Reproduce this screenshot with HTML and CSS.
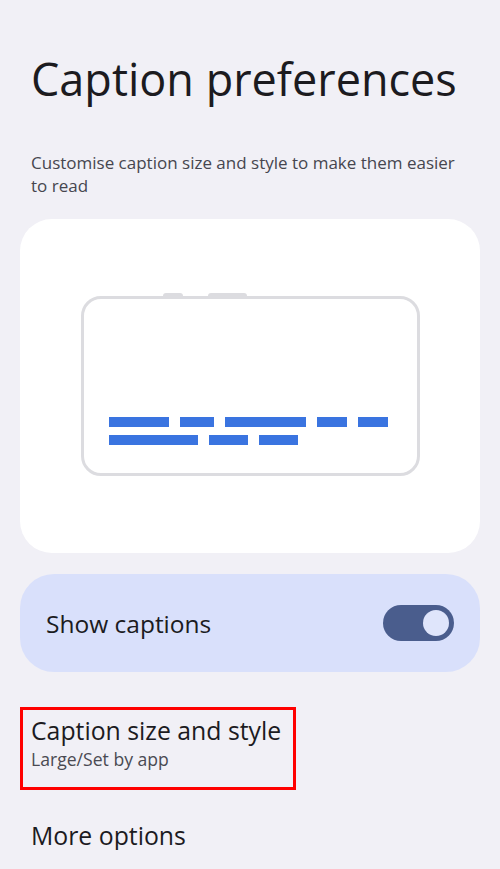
FILE: index.html
```html
<!DOCTYPE html>
<html>
<head>
<meta charset="utf-8">
<link rel="stylesheet" href="styles.css">
</head>
<body>
<div class="page">
  <h1 class="title">Caption preferences</h1>
  <p class="subtitle">Customise caption size and style to make them easier to read</p>
  <div class="preview">
    <div class="phone">
      <div class="notch notch-a"></div>
      <div class="notch notch-b"></div>
      <div class="lines">
        <div class="line">
          <span class="bar" style="width:60px"></span>
          <span class="bar" style="width:34px"></span>
          <span class="bar" style="width:81px"></span>
          <span class="bar" style="width:30px"></span>
          <span class="bar" style="width:30px"></span>
        </div>
        <div class="line">
          <span class="bar" style="width:89px"></span>
          <span class="bar" style="width:39px"></span>
          <span class="bar" style="width:39px"></span>
        </div>
      </div>
    </div>
  </div>
  <div class="toggle-card">
    <span class="toggle-label">Show captions</span>
    <span class="switch"><span class="knob"></span></span>
  </div>
  <div class="item highlighted">
    <div class="item-title">Caption size and style</div>
    <div class="item-sub">Large/Set by app</div>
  </div>
  <div class="item plain">
    <div class="item-title">More options</div>
  </div>
</div>
</body>
</html>
```
FILE: styles.css
```css
html, body {
  margin: 0;
  padding: 0;
  background: #f1f0f6;
}
body {
  font-family: "Open Sans", "Roboto", sans-serif;
  color: #1c1b1f;
}
.page {
  padding: 0 20px;
  display: flex;
  flex-direction: column;
}
.title {
  margin: 51px 0 0 11px;
  font-weight: 400;
  font-size: 45px;
  line-height: 56px;
  letter-spacing: 0;
}
.subtitle {
  margin: 44px 0 0 11px;
  max-width: 442px;
  font-size: 17px;
  line-height: 23px;
  color: #46464f;
}
.preview {
  margin-top: 22px;
  height: 334px;
  background: #ffffff;
  border-radius: 32px;
  display: flex;
  justify-content: center;
  align-items: center;
}
.phone {
  position: relative;
  box-sizing: border-box;
  width: 339px;
  height: 180px;
  border: 3px solid #dcdce0;
  border-radius: 20px;
  display: flex;
  flex-direction: column;
  justify-content: flex-end;
  padding: 0 0 28px 25px;
}
.notch {
  position: absolute;
  top: -6px;
  height: 4px;
  background: #dcdce0;
  border-radius: 3px 3px 0 0;
}
.notch-a { left: 79px; width: 20px; }
.notch-b { left: 124px; width: 39px; }
.lines {
  display: flex;
  flex-direction: column;
  gap: 8px;
}
.line {
  display: flex;
  gap: 11px;
}
.bar {
  display: block;
  height: 10px;
  background: #3a74e0;
}
.toggle-card {
  margin-top: 21px;
  height: 98px;
  background: #d9e0fb;
  border-radius: 34px;
  display: flex;
  align-items: center;
  justify-content: space-between;
  padding: 0 26px 0 26px;
}
.toggle-label {
  font-size: 24.5px;
  color: #1b1b21;
}
.switch {
  position: relative;
  width: 71px;
  height: 36px;
  border-radius: 18px;
  background: #4a5d8d;
}
.knob {
  position: absolute;
  right: 5px;
  top: 5px;
  width: 26px;
  height: 26px;
  border-radius: 50%;
  background: #dfe5fb;
}
.item {
  display: flex;
  flex-direction: column;
}
.highlighted {
  margin-top: 35px;
  width: 276px;
  height: 83px;
  box-sizing: border-box;
  border: 3px solid #ff0000;
  padding: 5px 0 0 8px;
}
.item-title {
  font-size: 24.8px;
  line-height: 30px;
  color: #1c1b1f;
}
.item-sub {
  margin-top: 3px;
  font-size: 17.6px;
  line-height: 22px;
  color: #4a4a52;
}
.plain {
  margin-top: 30px;
  padding-left: 11px;
}
```
